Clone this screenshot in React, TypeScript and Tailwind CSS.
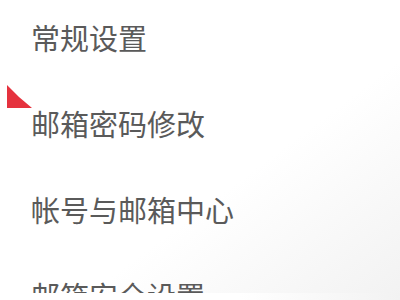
const items = ['常规设置', '邮箱密码修改', '帐号与邮箱中心', '邮箱安全设置']

const App = () => {
    return (
        <div className="relative w-[400px] h-[300px] overflow-hidden bg-gradient-to-br from-white from-60% to-[#f2f2f2]">
            {/* Settings menu */}
            <ul
                className="flex flex-col gap-[46px] pt-[17px] pl-[31px] text-[29px] leading-[40px] text-[#5a5a5a]"
                style={{ fontFamily: '"Noto Sans CJK SC", "Noto Sans", sans-serif' }}
            >
                {items.map((item, i) => (
                    <li key={i} className="whitespace-nowrap">
                        {item}
                    </li>
                ))}
            </ul>

            {/* Active marker */}
            <svg className="absolute left-[7px] top-[85px]" width="25" height="24" viewBox="0 0 25 24">
                <path d="M0 0 Q 12 13 25 23 L 0 23 Z" fill="#e5323e" />
            </svg>

            {/* Bottom edge */}
            <div className="absolute left-0 right-0 bottom-0 h-[7px] bg-gradient-to-r from-white from-60% to-[#f2f2f2]" />
        </div>
    )
}

export default App
